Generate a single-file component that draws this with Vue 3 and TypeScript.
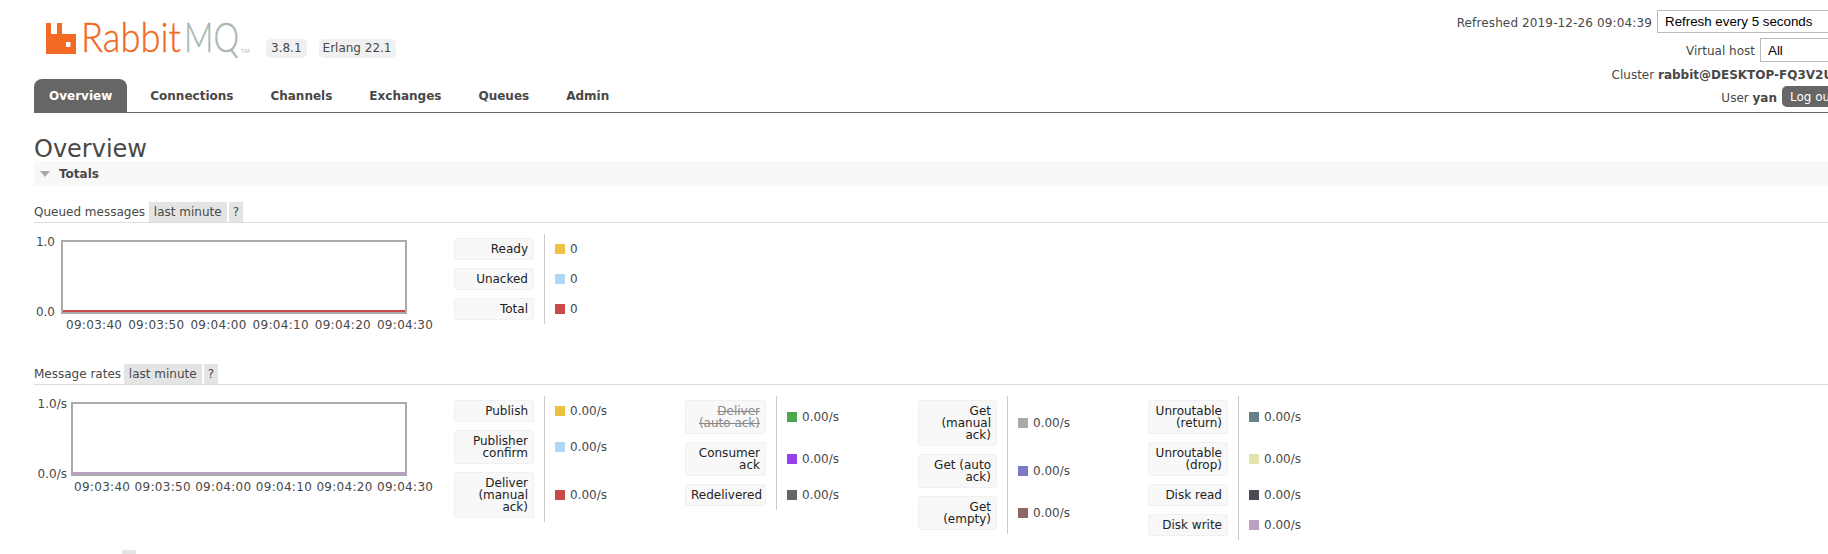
<script setup lang="ts">
interface Row { label: string; value: string; color: string; off?: boolean }
interface Group { rows: Row[]; width: number; labelWidth: number }

const tabs: string[] = ['Overview', 'Connections', 'Channels', 'Exchanges', 'Queues', 'Admin']

const queued: Group[] = [
  { width: 231, labelWidth: 80, rows: [
    { label: 'Ready', value: '0', color: '#edc240' },
    { label: 'Unacked', value: '0', color: '#afd8f8' },
    { label: 'Total', value: '0', color: '#cb4b4b' },
  ] },
]

const rates: Group[] = [
  { width: 231, labelWidth: 80, rows: [
    { label: 'Publish', value: '0.00/s', color: '#edc240' },
    { label: 'Publisher confirm', value: '0.00/s', color: '#afd8f8' },
    { label: 'Deliver (manual ack)', value: '0.00/s', color: '#cb4b4b' },
  ] },
  { width: 233, labelWidth: 81, rows: [
    { label: 'Deliver (auto ack)', value: '0.00/s', color: '#4da74d', off: true },
    { label: 'Consumer ack', value: '0.00/s', color: '#9440ed' },
    { label: 'Redelivered', value: '0.00/s', color: '#666666' },
  ] },
  { width: 230, labelWidth: 79, rows: [
    { label: 'Get (manual ack)', value: '0.00/s', color: '#aaaaaa' },
    { label: 'Get (auto ack)', value: '0.00/s', color: '#7c79c3' },
    { label: 'Get (empty)', value: '0.00/s', color: '#8e6767' },
  ] },
  { width: 231, labelWidth: 80, rows: [
    { label: 'Unroutable (return)', value: '0.00/s', color: '#67808c' },
    { label: 'Unroutable (drop)', value: '0.00/s', color: '#e5e4ae' },
    { label: 'Disk read', value: '0.00/s', color: '#4b4a55' },
    { label: 'Disk write', value: '0.00/s', color: '#bba0c1' },
  ] },
]

const ticks1: string[] = ['09:03:40', '09:03:50', '09:04:00', '09:04:10', '09:04:20', '09:04:30']
</script>

<template>
  <div class="page">
    <header class="top">
      <div class="brand">
        <div class="logo-row">
          <svg class="logo" width="206" height="38" viewBox="46 20 206 38">
            <path fill="#f26a23" fill-rule="evenodd" d="M46 23h5v11h6V23h5v11H76v20H46zM66 42v5h4.500v-5z" />
            <text x="81" y="52" class="logo-text" fill="#f26a23" stroke="#f26a23" textLength="100" lengthAdjust="spacingAndGlyphs">Rabbit</text>
            <text x="184" y="52" class="logo-text" fill="#a9b7b1" stroke="#a9b7b1" textLength="55" lengthAdjust="spacingAndGlyphs">MQ</text>
            <text x="241" y="53" class="logo-tm" fill="#bbbbbb">TM</text>
          </svg>
          <span class="ver first">3.8.1</span>
          <span class="ver">Erlang 22.1</span>
        </div>
        <nav class="tabs">
          <a v-for="(t, i) in tabs" :key="t" class="tab" :class="{ active: i === 0 }">{{ t }}</a>
        </nav>
      </div>
      <div class="info">
        <div class="info-row r1">
          <span class="lbl wide">Refreshed 2019-12-26 09:04:39</span>
          <select class="sel s1"><option>Refresh every 5 seconds</option></select>
        </div>
        <div class="info-row r2">
          <span class="lbl">Virtual host</span>
          <select class="sel s2"><option>All</option></select>
        </div>
        <div class="info-row r3">
          <span class="lbl">Cluster <b>rabbit@DESKTOP-FQ3V2UP</b></span>
        </div>
        <div class="info-row r4">
          <span class="lbl">User <b>yan</b></span>
          <button class="logout">Log out</button>
        </div>
      </div>
    </header>

    <h1 class="title">Overview</h1>
    <div class="totals"><i class="tri"></i><b>Totals</b></div>

    <section class="sec q">
      <h3 class="sec-head">Queued messages <span class="tag first-tag">last minute</span><span class="tag">?</span></h3>
      <div class="sec-body">
        <div class="chart">
          <div class="plot-row">
            <div class="ylab"><span>1.0</span><span>0.0</span></div>
            <div class="plot"><div class="floor red"></div></div>
          </div>
          <div class="ticks"><span v-for="t in ticks1" :key="t" class="tick">{{ t }}</span></div>
        </div>
        <div class="legend">
          <div v-for="(g, gi) in queued" :key="gi" class="group" :style="{ width: g.width + 'px' }">
            <div v-for="r in g.rows" :key="r.label" class="row">
              <div class="lab" :style="{ width: g.labelWidth + 'px' }">{{ r.label }}</div>
              <div class="val"><i class="sw" :style="{ background: r.color }"></i>{{ r.value }}</div>
            </div>
          </div>
        </div>
      </div>
    </section>

    <section class="sec m">
      <h3 class="sec-head">Message rates <span class="tag first-tag">last minute</span><span class="tag">?</span></h3>
      <div class="sec-body">
        <div class="chart">
          <div class="plot-row">
            <div class="ylab"><span>1.0/s</span><span>0.0/s</span></div>
            <div class="plot"><div class="floor mauve"></div></div>
          </div>
          <div class="ticks"><span v-for="t in ticks1" :key="t" class="tick">{{ t }}</span></div>
        </div>
        <div class="legend">
          <div v-for="(g, gi) in rates" :key="gi" class="group" :style="{ width: g.width + 'px' }">
            <div v-for="r in g.rows" :key="r.label" class="row">
              <div class="lab" :class="{ off: r.off }" :style="{ width: g.labelWidth + 'px' }">{{ r.label }}</div>
              <div class="val"><i class="sw" :style="{ background: r.color }"></i>{{ r.value }}</div>
            </div>
          </div>
        </div>
      </div>
    </section>

    <section class="sec g">
      <h3 class="sec-head">Global counts <span class="tag">?</span></h3>
    </section>
  </div>
</template>

<style>
html, body { margin: 0; overflow: hidden; background: #fff; }
</style>

<style scoped>
.page {
  width: 1828px;
  height: 554px;
  overflow: hidden;
  box-sizing: border-box;
  padding-left: 34px;
  font-family: "DejaVu Sans", sans-serif;
  font-size: 12px;
  color: #484848;
}
.top {
  display: flex;
  justify-content: space-between;
  height: 113px;
  box-sizing: border-box;
  border-bottom: 1px solid #666;
}
.brand { display: flex; flex-direction: column; }
.logo-row {
  height: 79px;
  display: flex;
  align-items: flex-start;
  padding-left: 12px;
  box-sizing: border-box;
}
.logo { margin-top: 20px; flex: none; }
.logo-text { font-family: Lato, sans-serif; font-weight: 300; font-size: 41px; stroke-width: 0.4px; }
.logo-tm { font-family: "Liberation Sans", sans-serif; font-size: 6px; }
.ver {
  margin-top: 39px;
  height: 19px;
  line-height: 19px;
  padding: 0 4px;
  background: #f0f0f0;
  border-radius: 5px;
  margin-left: 12px;
  white-space: nowrap;
}
.ver.first { margin-left: 14px; padding: 0 5px; }
.tabs { display: flex; gap: 7px; height: 33px; }
.tab {
  padding: 0 15px;
  line-height: 35px;
  font-weight: bold;
  color: #484848;
  white-space: nowrap;
}
.tab:nth-child(2) { margin-left: 1px; }
.tab.active {
  background: #666;
  color: #fff;
  border-radius: 8px 8px 0 0;
}
.info {
  display: flex;
  flex-direction: column;
  align-items: flex-end;
  padding-top: 10px;
  box-sizing: border-box;
}
.info-row { display: flex; align-items: center; gap: 5px; white-space: nowrap; }
.lbl { padding-top: 2px; }
.wide { letter-spacing: 0.13px; }
.r1 { height: 23px; margin-right: -32px; margin-bottom: 5px; }
.r2 { height: 24px; margin-right: -32px; }
.r3 { height: 24px; margin-right: -14px; }
.r4 { height: 21px; margin-right: -32px; }
.info b { color: #484848; }
.sel {
  appearance: none;
  height: 100%;
  box-sizing: border-box;
  border: 1px solid #bbb;
  background: #fff;
  color: #000;
  font-family: "Liberation Sans", sans-serif;
  font-size: 13.33px;
  padding: 0 7px;
  border-radius: 0;
}
.s1 { width: 203px; }
.s2 { width: 100px; }
.logout {
  height: 21px;
  width: 78px;
  margin-left: 0;
  border: 0;
  border-radius: 5px;
  background: #666;
  color: #fff;
  font-family: "DejaVu Sans", sans-serif;
  font-size: 12px;
  text-align: left;
  padding: 0 8px;
}
.title {
  margin: 0;
  height: 48px;
  padding-top: 22px;
  box-sizing: border-box;
  font-size: 24px;
  font-weight: normal;
  line-height: 28px;
  color: #484848;
}
.totals {
  display: flex;
  align-items: center;
  height: 25px;
  background: #f8f8f8;
  padding-left: 6px;
}
.totals b { color: #484848; }
.tri {
  width: 0;
  height: 0;
  border-left: 5px solid transparent;
  border-right: 5px solid transparent;
  border-top: 6px solid #aaa;
  margin-right: 9px;
}
.sec-head {
  margin: 0;
  height: 21px;
  box-sizing: border-box;
  border-bottom: 1px solid #ddd;
  font-size: 12px;
  font-weight: normal;
  line-height: 20px;
  white-space: nowrap;
}
.tag {
  display: inline-block;
  height: 20px;
  padding: 0 4px;
  margin-left: 2px;
  background: #e4e4e4;
  vertical-align: top;
}
.first-tag { margin-left: 0; padding: 0 5px; }
.m .first-tag { margin-left: -1px; }
.q { margin-top: 16px; }
.m { margin-top: 40px; }
.g { margin-top: 10px; }
.sec-body { display: flex; margin-top: 11px; }
.q .sec-body { height: 90px; }
.chart { width: 420px; flex: none; padding-top: 6px; box-sizing: border-box; }
.plot-row { display: flex; height: 74px; }
.q .ylab { width: 21px; margin-right: 6px; }
.m .ylab { width: 33px; margin-right: 4px; }
.ylab {
  display: flex;
  flex-direction: column;
  justify-content: space-between;
  align-items: flex-end;
  margin: -5px 0;
  line-height: 14px;
  white-space: nowrap;
}
.plot {
  flex: none;
  box-sizing: border-box;
  border: 2px solid #aaa;
  display: flex;
  align-items: flex-end;
}
.q .plot { width: 346px; }
.m .plot { width: 336px; }
.floor { width: 100%; height: 2px; }
.floor.red { background: #cb4b4b; }
.floor.mauve { background: #bba0c1; }
.ticks {
  display: flex;
  justify-content: space-between;
  margin-top: 4px;
  line-height: 14px;
}
.q .ticks { margin-left: 32px; margin-right: 21px; }
.m .ticks { margin-left: 40px; margin-right: 21px; }
.tick { width: 56px; text-align: center; white-space: nowrap; letter-spacing: 0.3px; }
.legend { display: flex; }
.group { flex: none; }
.row { display: flex; align-items: stretch; }
.lab {
  flex: none;
  box-sizing: border-box;
  margin: 4px 10px 4px 0;
  padding: 4px 5px;
  line-height: 12px;
  background: #f8f8f8;
  border: 1px solid #f0f0f0;
  border-radius: 3px;
  text-align: right;
  color: #222;
}
.lab.off { color: #888; text-decoration: line-through; }
.val {
  display: flex;
  align-items: center;
  border-left: 1px solid #ccc;
  padding-left: 10px;
}
.sw { width: 10px; height: 10px; margin-right: 5px; flex: none; }
</style>
